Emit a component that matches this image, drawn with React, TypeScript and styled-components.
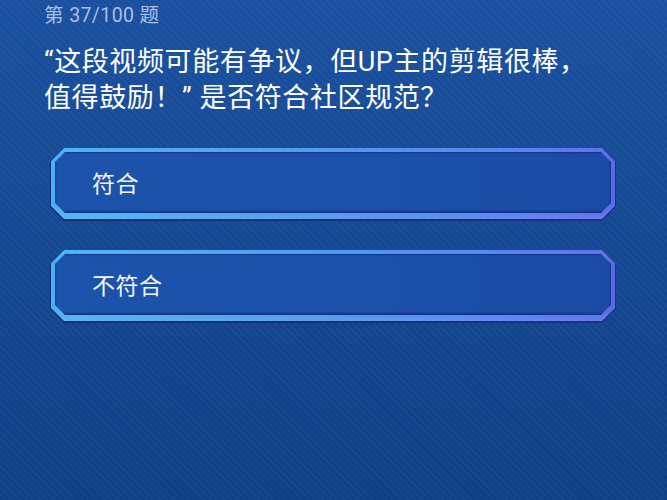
import React from "react";
import styled, { createGlobalStyle } from "styled-components";

const GlobalStyle = createGlobalStyle`
  html, body {
    margin: 0;
    padding: 0;
    height: 100%;
  }
  body {
    font-family: Roboto, "Noto Sans CJK SC", sans-serif;
    background: #144893;
  }
`;

const Screen = styled.div`
  width: 667px;
  height: 500px;
  overflow: hidden;
  box-sizing: border-box;
  padding: 3px 0 0 44px;
  background:
    repeating-linear-gradient(
      45deg,
      rgba(255, 255, 255, 0) 0px,
      rgba(255, 255, 255, 0) 3px,
      rgba(255, 255, 255, 0.028) 3px,
      rgba(255, 255, 255, 0.028) 5px
    ),
    linear-gradient(180deg, #1a509f 0%, #154893 50%, #0f3f86 100%);
`;

const Counter = styled.div`
  font-size: 19.5px;
  line-height: 26px;
  color: #a9bfe6;
  letter-spacing: 0.4px;
`;

const Question = styled.div`
  margin-top: 15px;
  font-size: 27px;
  line-height: 36px;
  color: #ffffff;
  letter-spacing: 0.6px;
`;

const Options = styled.div`
  margin: 32px 0 0 6px;
  display: flex;
  flex-direction: column;
  gap: 29px;
`;

const octagon = (c: number) =>
  `polygon(${c}px 0, calc(100% - ${c}px) 0, 100% ${c}px, 100% calc(100% - ${c}px), calc(100% - ${c}px) 100%, ${c}px 100%, 0 calc(100% - ${c}px), 0 ${c}px)`;

const Shell = styled.button`
  display: block;
  width: 566px;
  height: 73px;
  padding: 0 1px 2px 1px;
  border: 0;
  box-sizing: border-box;
  background: linear-gradient(90deg, #0f2f72, #16357c);
  clip-path: ${octagon(14)};
  cursor: pointer;
  font: inherit;
`;

const Rim = styled.div`
  height: 100%;
  box-sizing: border-box;
  padding: 4px 4px 6px 4px;
  clip-path: ${octagon(13)};
  background:
    linear-gradient(180deg, rgba(255, 255, 255, 0.06) 0%, rgba(255, 255, 255, 0) 20%, rgba(0, 0, 0, 0) 80%, rgba(255, 255, 255, 0.1) 100%),
    linear-gradient(90deg, #48b0f5 0%, #4a97ee 45%, #507ff0 80%, #5b68ec 100%);
`;

const Face = styled.div`
  height: 100%;
  box-sizing: border-box;
  display: flex;
  align-items: center;
  padding: 0 0 1px 37px;
  clip-path: ${octagon(10)};
  background: linear-gradient(90deg, #1c53ab 0%, #1c50aa 60%, #1b4ba5 100%);
  box-shadow:
    inset 0 -3px 2px -1px rgba(10, 35, 110, 0.55),
    inset 0 2px 2px -1px rgba(10, 35, 110, 0.45),
    inset 2px 0 2px -1px rgba(10, 35, 110, 0.45),
    inset -2px 0 2px -1px rgba(10, 35, 110, 0.45);
`;

const Label = styled.span`
  font-family: "Noto Sans CJK SC", sans-serif;
  font-size: 23px;
  line-height: 30px;
  color: #f4f7ff;
  letter-spacing: 0.5px;
`;

const choices = ["符合", "不符合"];

export default function App() {
  return (
    <>
      <GlobalStyle />
      <Screen>
        <Counter>第 37/100 题</Counter>
        <Question>
          “这段视频可能有争议，但UP主的剪辑很棒，
          <br />
          值得鼓励！” 是否符合社区规范？
        </Question>
        <Options>
          {choices.map((c) => (
            <Shell key={c} type="button">
              <Rim>
                <Face>
                  <Label>{c}</Label>
                </Face>
              </Rim>
            </Shell>
          ))}
        </Options>
      </Screen>
    </>
  );
}
